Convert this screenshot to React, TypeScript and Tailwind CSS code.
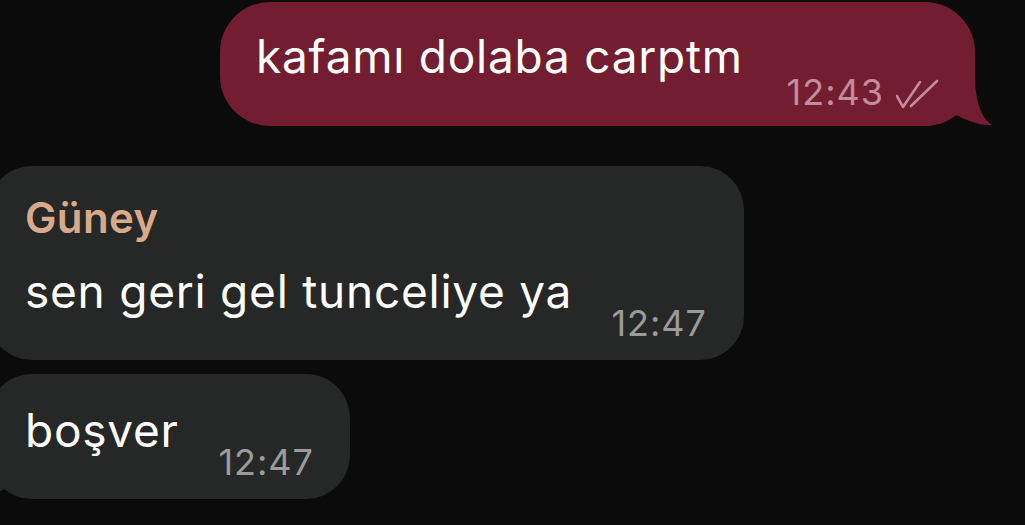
import React from "react";

const Tail = ({ color, flip }: { color: string; flip?: boolean }) => (
  <svg
    width="80"
    height="67"
    viewBox="0 0 80 67"
    className={
      flip
        ? "absolute left-[-20px] bottom-[-1px] -scale-x-100"
        : "absolute right-[-20px] bottom-[-1px]"
    }
  >
    <path
      d="M0 0 L60 0 L60 16 C60 40 66 58 77 65 C65 66 50 60 38 53 C30 58 20 66 10 66 L0 66 Z"
      fill={color}
    />
  </svg>
);

const Checks = () => (
  <svg width="44" height="32" viewBox="0 0 44 32" className="mb-[2px]">
    <g
      fill="none"
      stroke="#c48b9a"
      strokeWidth="2.6"
      strokeLinecap="round"
      strokeLinejoin="round"
    >
      <path d="M1 18 L7 29 L24 4" />
      <path d="M15 28 L41 3" />
    </g>
  </svg>
);

const Time = ({ t, cls }: { t: string; cls: string }) => (
  <span className={"text-[36px] leading-[40px] tracking-[1px] " + cls}>{t}</span>
);

export default function App() {
  return (
    <div className="w-[1025px] h-[525px] overflow-hidden bg-[#0b0b0b] flex flex-col font-['Inter',sans-serif] text-white">
      {/* sent */}
      <div className="relative self-end mr-[50px] mt-[2px] w-[755px] h-[124px] rounded-[50px] bg-[#721d30] pl-[36px] pr-[35px] flex justify-between">
        <div className="mt-[26px] text-[46px] leading-[56px] tracking-[0.75px] relative z-10">
          kafamı dolaba carptm
        </div>
        <div className="mt-[70px] flex items-end gap-[12px] relative z-10 h-[40px]">
          <Time t="12:43" cls="text-[#c48b9a]" />
          <Checks />
        </div>
        <Tail color="#721d30" />
      </div>

      {/* received 1 */}
      <div className="relative -ml-[12px] mt-[40px] w-[756px] h-[194px] rounded-[44px] bg-[#262727] pl-[37px] pr-[37px] pt-[27px]">
        <div className="text-[42px] leading-[50px] font-semibold text-[#d8aa8a] tracking-[0.4px]">
          Güney
        </div>
        <div className="mt-[20px] flex justify-between">
          <span className="text-[46px] leading-[56px] tracking-[0.75px]">
            sen geri gel tunceliye ya
          </span>
          <div className="mt-[40px]">
            <Time t="12:47" cls="text-[#9b9b9b]" />
          </div>
        </div>
      </div>

      {/* received 2 */}
      <div className="relative -ml-[12px] mt-[14px] w-[362px] h-[125px] rounded-[44px] bg-[#262727] pl-[37px] pr-[36px] pt-[28px] flex justify-between">
        <span className="text-[46px] leading-[56px] tracking-[0.75px] relative z-10">boşver</span>
        <div className="mt-[40px] relative z-10">
          <Time t="12:47" cls="text-[#9b9b9b]" />
        </div>
        <Tail color="#262727" flip />
      </div>
    </div>
  );
}
